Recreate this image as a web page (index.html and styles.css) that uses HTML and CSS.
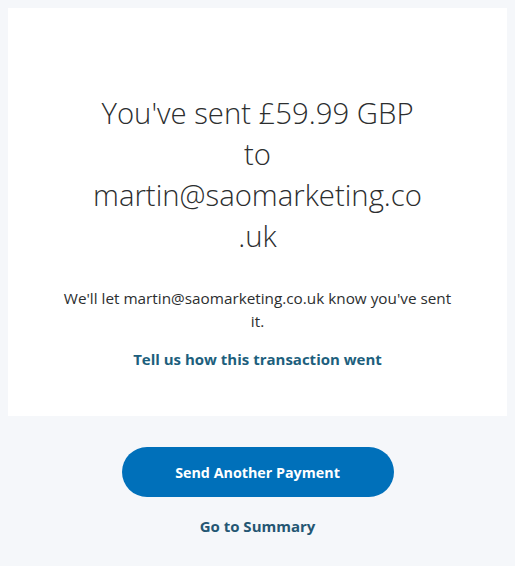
FILE: index.html
```html
<!DOCTYPE html>
<html lang="en">
<head>
<meta charset="utf-8">
<title>Payment sent</title>
<link rel="stylesheet" href="styles.css">
</head>
<body>
<main class="page">
  <section class="card">
    <h1 class="headline">You've sent £59.99 GBP to martin@saomarketing.co<wbr>.uk</h1>
    <p class="note">We'll let martin@saomarketing.co.uk know you've sent it.</p>
    <a class="feedback" href="#">Tell us how this transaction went</a>
  </section>
  <div class="actions">
    <a class="primary" href="#">Send Another Payment</a>
    <a class="secondary" href="#">Go to Summary</a>
  </div>
</main>
</body>
</html>
```
FILE: styles.css
```css
html, body {
  margin: 0;
  padding: 0;
  background: #f5f7fa;
}
body {
  font-family: "Open Sans", "Liberation Sans", sans-serif;
  color: #2c2e2f;
}
.page {
  padding: 8px 8px 0 8px;
}
.card {
  background: #ffffff;
  height: 408px;
  box-sizing: border-box;
  padding-top: 85px;
  display: flex;
  flex-direction: column;
  align-items: center;
}
.headline {
  margin: 0;
  width: 336px;
  font-size: 29.3px;
  font-weight: 300;
  line-height: 41px;
  text-align: center;
  color: #2c2e2f;
}
.note {
  margin: 30px 0 0 0;
  width: 398px;
  font-size: 15.3px;
  line-height: 23px;
  text-align: center;
  color: #2c2e2f;
}
.feedback {
  margin-top: 16px;
  font-size: 15px;
  font-weight: 700;
  color: #1d5f7d;
  text-decoration: none;
}
.actions {
  display: flex;
  flex-direction: column;
  align-items: center;
  padding-top: 31px;
}
.primary {
  width: 272px;
  height: 50px;
  border-radius: 25px;
  background: #0070ba;
  color: #ffffff;
  font-size: 14.3px;
  font-weight: 700;
  display: flex;
  align-items: center;
  justify-content: center;
  text-decoration: none;
}
.secondary {
  margin-top: 19px;
  font-size: 15px;
  font-weight: 700;
  color: #245673;
  text-decoration: none;
}
```
